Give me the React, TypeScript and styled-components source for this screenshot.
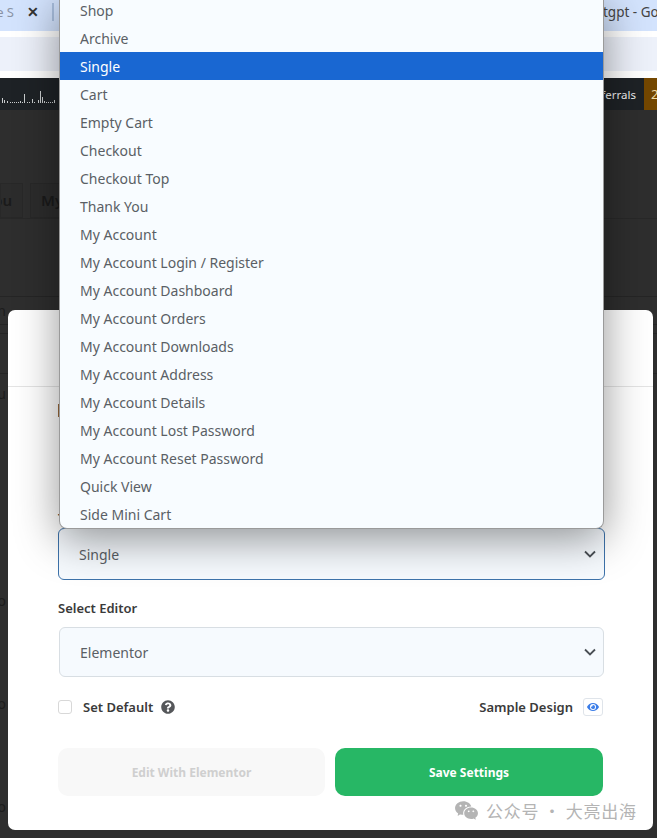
import React from 'react';
import styled, { createGlobalStyle } from 'styled-components';
import { FaEye, FaQuestionCircle } from 'react-icons/fa';
import { RiWechatFill } from 'react-icons/ri';

const GlobalStyle = createGlobalStyle`
  *, *::before, *::after {
    box-sizing: border-box;
  }

  html, body {
    margin: 0;
    padding: 0;
    height: 100%;
    background: #2e2e2e;
    font-family: 'Noto Sans', 'Open Sans', sans-serif;
  }
`;

const Page = styled.div`
  position: relative;
  width: 657px;
  height: 838px;
  overflow: hidden;
  background: #2e2e2e;
`;

/* browser chrome */
const TabStrip = styled.div`
  height: 31px;
  padding-bottom: 8px;
  background: #d3e3fd;
  display: flex;
  align-items: center;
  justify-content: space-between;
  font-size: 14px;
  color: #444;
`;

const TabLeft = styled.div`
  display: flex;
  align-items: center;
`;

const TabFade = styled.span`
  width: 14px;
  overflow: hidden;
  white-space: nowrap;
  direction: rtl;
  color: #8a93a5;
  font-size: 13px;
`;

const TabClose = styled.span`
  margin-left: 13px;
  font-size: 14px;
  font-weight: 600;
  color: #333;
  width: 12px;
  text-align: center;
`;

const TabDivider = styled.span`
  width: 2px;
  height: 18px;
  margin-left: 13px;
  background: #a9bfdf;
`;

const TabRight = styled.span`
  width: 54px;
  white-space: nowrap;
  overflow: hidden;
  font-size: 13.5px;
`;

const Gap = styled.div`
  height: 6px;
  background: #ffffff;
`;

const AddressBar = styled.div`
  height: 34px;
  background: #edf1fa;
`;

const GapBottom = styled(Gap)`
  height: 7px;
`;

const AdminBar = styled.div`
  height: 32px;
  background: #1e2226;
  display: flex;
  align-items: flex-end;
  justify-content: space-between;
  color: #f0f0f0;
`;

const Sparkline = styled.svg`
  width: 56px;
  height: 16px;
  margin-bottom: 6px;
  display: block;
`;

const AdminRight = styled.div`
  display: flex;
  height: 100%;
  align-items: center;
  font-size: 11.5px;
`;

const Badge = styled.span`
  height: 100%;
  width: 13px;
  margin-left: 8px;
  padding: 7px 0 0 7px;
  background: #744700;
  color: #f2dca6;
  font-size: 13px;
  overflow: hidden;
`;

/* dimmed wordpress page behind the modal */
const DimTabs = styled.div`
  margin-top: 73px;
  height: 36px;
  display: flex;
  gap: 7px;
  border-bottom: 1px solid #282828;
`;

const DimTab = styled.div<{ $w: number }>`
  width: ${(p) => p.$w}px;
  height: 35px;
  padding-right: 10px;
  background: #2c2c2c;
  border: 1px solid #282828;
  font-size: 15px;
  font-weight: 600;
  line-height: 33px;
  color: #1a1a1a;
  overflow: hidden;
  display: flex;
  justify-content: flex-end;
  white-space: nowrap;
`;

const DimTabMy = styled(DimTab)`
  justify-content: flex-start;
  padding: 0 0 0 10px;
`;

const DimRow = styled.div<{ $h: number; $mt?: number }>`
  height: ${(p) => p.$h}px;
  margin-top: ${(p) => p.$mt ?? 0}px;
  border-bottom: 1px solid #252525;
  color: #1c1c1c;
  font-size: 14px;
  display: flex;
  align-items: center;
  justify-content: flex-start;
  width: 657px;
`;

const DimGlyph = styled.span`
  width: 6px;
  overflow: hidden;
  display: flex;
  justify-content: flex-end;
`;

const DimPlain = styled(DimRow)`
  border-bottom: none;
`;

/* modal */
const Modal = styled.div`
  position: absolute;
  left: 8px;
  top: 310px;
  width: 645px;
  height: 520px;
  background: #ffffff;
  border-radius: 7px;
`;

const ModalHeader = styled.div`
  height: 77px;
  border-bottom: 1px solid #e4e4e4;
`;

const ModalBody = styled.div`
  padding: 17px 50px 0;
`;

const Notice = styled.div`
  height: 13px;
  width: 40px;
  border-left: 2px solid #9b6a3c;
`;

const FieldLabel = styled.div<{ $mt: number; $mb?: number }>`
  margin-top: ${(p) => p.$mt}px;
  margin-bottom: ${(p) => p.$mb ?? 0}px;
  height: 20px;
  font-size: 13px;
  line-height: 20px;
  font-weight: 600;
  color: #3a3a3a;
`;

const Field = styled.div<{ $focused?: boolean }>`
  height: ${(p) => (p.$focused ? 52 : 50)}px;
  margin: ${(p) => (p.$focused ? '0 -2px 0 0' : '0 -1px 0 1px')};
  padding-left: 20px;
  padding-right: ${(p) => (p.$focused ? 8 : 7)}px;
  display: flex;
  align-items: center;
  justify-content: space-between;
  background: #f6fafe;
  border: 1px solid ${(p) => (p.$focused ? '#3d72aa' : '#d8dee3')};
  border-radius: 6px;
  font-size: 14px;
  color: #5a5f65;
`;

const Chevron = styled.svg`
  width: 12px;
  height: 8px;
  display: block;
`;

const OptionsRow = styled.div`
  margin-top: 20px;
  height: 20px;
  display: flex;
  align-items: center;
  justify-content: space-between;
`;

const OptionGroup = styled.div`
  display: flex;
  align-items: center;
`;

const Checkbox = styled.span`
  width: 14px;
  height: 14px;
  background: #fff;
  border: 1px solid #d8d8d8;
  border-radius: 3px;
`;

const OptionText = styled.span`
  font-size: 13px;
  font-weight: 600;
  color: #3a3a3a;
`;

const DefaultText = styled(OptionText)`
  margin-left: 11px;
`;

const HelpIcon = styled(FaQuestionCircle)`
  width: 14px;
  height: 14px;
  margin-left: 8px;
  color: #55575a;
`;

const EyeButton = styled.span`
  width: 20px;
  height: 18px;
  margin-left: 10px;
  display: flex;
  align-items: center;
  justify-content: center;
  border: 1px solid #dfe4ea;
  border-radius: 3px;
  color: #3b7de8;
  font-size: 12px;
`;

const Buttons = styled.div`
  margin-top: 31px;
  display: grid;
  grid-template-columns: 267px 268px;
  gap: 10px;
`;

const ActionButton = styled.div<{ $primary?: boolean }>`
  height: 48px;
  border-radius: 10px;
  display: flex;
  align-items: center;
  justify-content: center;
  font-size: 12px;
  font-weight: 700;
  background: ${(p) => (p.$primary ? '#27b765' : '#f8f8f8')};
  color: ${(p) => (p.$primary ? '#ffffff' : '#cfcfcf')};
`;

/* open select list, lies over everything */
const Dropdown = styled.ul`
  position: absolute;
  left: 59px;
  top: -4px;
  width: 545px;
  margin: 0;
  padding: 0;
  list-style: none;
  background: #f8fcff;
  border: 1px solid #9a9a9a;
  border-top: none;
  border-radius: 0 0 8px 8px;
  box-shadow: 0 10px 44px rgba(0, 0, 0, 0.42);
  overflow: hidden;
`;

const Option = styled.li<{ $active?: boolean }>`
  height: 28px;
  padding-left: 20px;
  line-height: 30px;
  font-size: 14px;
  color: ${(p) => (p.$active ? '#ffffff' : '#5a5f65')};
  background: ${(p) => (p.$active ? '#1967d2' : 'transparent')};
`;

const Watermark = styled.div`
  position: absolute;
  left: 454px;
  top: 798px;
  display: flex;
  align-items: center;
  gap: 7px;
  color: #b4b4b4;
  font-family: 'Noto Sans CJK SC', 'Noto Sans', sans-serif;
  font-size: 17px;
  letter-spacing: 0.7px;
  white-space: nowrap;
`;

const WechatIcon = styled(RiWechatFill)`
  width: 25px;
  height: 25px;
  color: #b4b4b4;
`;

const options = [
  'Shop',
  'Archive',
  'Single',
  'Cart',
  'Empty Cart',
  'Checkout',
  'Checkout Top',
  'Thank You',
  'My Account',
  'My Account Login / Register',
  'My Account Dashboard',
  'My Account Orders',
  'My Account Downloads',
  'My Account Address',
  'My Account Details',
  'My Account Lost Password',
  'My Account Reset Password',
  'Quick View',
  'Side Mini Cart',
];

const bars = [
  [2, 5], [4, 3], [7, 2], [10, 1], [12, 1], [14, 1], [16, 1], [18, 1], [20, 2], [22, 1],
  [24, 9], [27, 1], [29, 1], [32, 4], [34, 1], [38, 3], [40, 12], [42, 6], [44, 2], [46, 1],
  [48, 1], [50, 1], [52, 1], [54, 3],
];

const Arrow = () => (
  <Chevron viewBox="0 0 12 8" fill="none">
    <path d="M1 1.5 L6 6.5 L11 1.5" stroke="#4a4f55" strokeWidth="1.8" />
  </Chevron>
);

export default function App() {
  return (
    <Page>
      <GlobalStyle />
      <TabStrip>
        <TabLeft>
          <TabFade>e S</TabFade>
          <TabClose>✕</TabClose>
          <TabDivider />
        </TabLeft>
        <TabRight>tgpt - Google</TabRight>
      </TabStrip>
      <Gap />
      <AddressBar />
      <GapBottom />
      <AdminBar>
        <Sparkline viewBox="0 0 56 16">
          {bars.map(([x, h]) => (
            <rect key={x} x={x} y={15 - h} width="1" height={h} fill="#c9ccce" />
          ))}
        </Sparkline>
        <AdminRight>
          Referrals
          <Badge>2</Badge>
        </AdminRight>
      </AdminBar>

      <DimTabs>
        <DimTab $w={23}>You</DimTab>
        <DimTabMy $w={60}>My</DimTabMy>
      </DimTabs>
      <DimRow $h={61} $mt={17} />
      <DimRow $h={28}>
        <DimGlyph>n</DimGlyph>
      </DimRow>
      <DimRow $h={9} />
      <DimRow $h={40} />
      <DimPlain $h={38}>
        <DimGlyph>u</DimGlyph>
      </DimPlain>
      <DimPlain $h={20} $mt={178}>
        <DimGlyph>o</DimGlyph>
      </DimPlain>
      <DimPlain $h={20} $mt={83}>
        <DimGlyph>o</DimGlyph>
      </DimPlain>
      <DimPlain $h={20} $mt={83}>
        <DimGlyph>o</DimGlyph>
      </DimPlain>

      <Modal>
        <ModalHeader />
        <ModalBody>
          <Notice />
          <FieldLabel $mt={91}>Template Type</FieldLabel>
          <Field $focused>
            Single
            <Arrow />
          </Field>
          <FieldLabel $mt={18} $mb={9}>
            Select Editor
          </FieldLabel>
          <Field>
            Elementor
            <Arrow />
          </Field>
          <OptionsRow>
            <OptionGroup>
              <Checkbox />
              <DefaultText>Set Default</DefaultText>
              <HelpIcon />
            </OptionGroup>
            <OptionGroup>
              <OptionText>Sample Design</OptionText>
              <EyeButton>
                <FaEye />
              </EyeButton>
            </OptionGroup>
          </OptionsRow>
          <Buttons>
            <ActionButton>Edit With Elementor</ActionButton>
            <ActionButton $primary>Save Settings</ActionButton>
          </Buttons>
        </ModalBody>
      </Modal>

      <Dropdown>
        {options.map((o) => (
          <Option key={o} $active={o === 'Single'}>
            {o}
          </Option>
        ))}
      </Dropdown>

      <Watermark>
        <WechatIcon />
        公众号 · 大亮出海
      </Watermark>
    </Page>
  );
}
